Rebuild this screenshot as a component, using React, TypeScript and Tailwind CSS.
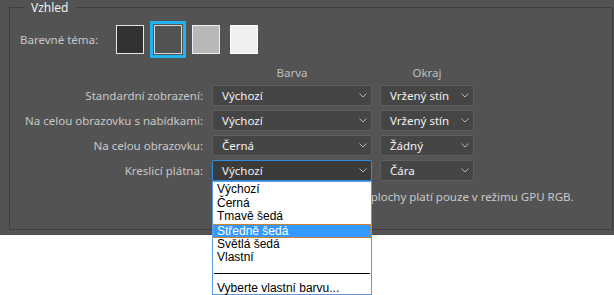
import { useState } from 'react';

function Chevron() {
  return (
    <svg width="8" height="5" viewBox="0 0 8 5" className="shrink-0">
      <polyline points="0.5,0.5 4,4 7.5,0.5" fill="none" stroke="#b4b4b4" strokeWidth="1" />
    </svg>
  );
}

function Select({ value, focused = false }: { value: string; focused?: boolean }) {
  return (
    <div
      className={
        focused
          ? 'flex h-[21px] items-center justify-between rounded-[2px] border border-[#2f8de4] bg-[#3b3b3b] pl-[9px] pr-[4px] text-[11.5px] text-[#f2f2f2]'
          : 'flex h-[21px] items-center justify-between rounded-[2px] border border-[#5f5f5f] bg-[#454545] pl-[9px] pr-[4px] text-[11.5px] text-[#f2f2f2]'
      }
    >
      <span className="leading-none">{value}</span>
      <Chevron />
    </div>
  );
}

const rows = [
  { label: 'Standardní zobrazení:', color: 'Výchozí', border: 'Vržený stín' },
  { label: 'Na celou obrazovku s nabídkami:', color: 'Výchozí', border: 'Vržený stín' },
  { label: 'Na celou obrazovku:', color: 'Černá', border: 'Žádný' },
  { label: 'Kreslicí plátna:', color: 'Výchozí', border: 'Čára' },
];

const options = ['Výchozí', 'Černá', 'Tmavě šedá', 'Středně šedá', 'Světlá šedá', 'Vlastní'];

export default function App() {
  const [theme] = useState(1);
  const swatches = ['bg-[#323232] border-[#e6e6e6]', 'bg-[#535353] border-[#d6d6d6]', 'bg-[#b8b8b8] border-[#efefef]', 'bg-[#f0f0f0] border-[#ffffff]'];

  return (
    <div className="h-[295px] w-[614px] overflow-hidden bg-white font-['Noto_Sans',sans-serif]">
      <div className="h-[235px] bg-[#535353]">
        <fieldset className="ml-[9px] mr-[1px] h-[230px] border border-[#3f3f3f] p-0">
          <legend className="ml-[15px] px-[6px] text-[12px] leading-[15px] text-[#f0f0f0]">Vzhled</legend>

          {/* Barevné téma */}
          <div className="mt-[10px] flex items-center pl-[10px]">
            <span className="w-[96px] text-[11.5px] text-[#c8c8c8]">Barevné téma:</span>
            <div className="flex gap-[10px]">
              {swatches.map((s, i) => (
                <div
                  key={i}
                  className={
                    i === theme
                      ? `h-[29px] w-[28px] border ${s} outline-[3px] outline-offset-[1px] outline-[#22b2ee]`
                      : `h-[29px] w-[28px] border ${s}`
                  }
                />
              ))}
            </div>
          </div>

          {/* Grid */}
          <div className="mt-[12px] grid grid-cols-[193px_160px_93px] gap-x-[9px] gap-y-[4px]">
            <div />
            <div className="mb-[1px] text-center text-[11.5px] leading-[14px] text-[#bebebe]">Barva</div>
            <div className="-ml-[1px] mb-[1px] text-center text-[11.5px] leading-[14px] text-[#bebebe]">Okraj</div>
            {rows.map((r, i) => (
              <div key={i} className="contents">
                <div className="flex items-center justify-end text-[11.5px] text-[#c8c8c8]">{r.label}</div>
                <div className="relative">
                  <Select value={r.color} focused={i === 3} />
                  {i === 3 && (
                    <div className="absolute left-0 top-[21px] z-10 h-[114px] w-[160px] border border-[#5b9be0] bg-white pt-[1px] font-['Liberation_Sans',sans-serif] text-[12px] text-black">
                      {options.map((o) => (
                        <div
                          key={o}
                          className={
                            o === 'Středně šedá'
                              ? 'h-[14px] border border-dotted border-[#d48a3a] bg-[#3399ff] pl-[3px] leading-[12px] text-white'
                              : 'h-[13.5px] pl-[4px] leading-[13.5px]'
                          }
                        >
                          {o}
                        </div>
                      ))}
                      <div className="mx-[1px] mt-[8px] h-[1px] bg-black" />
                      <div className="mt-[8px] pl-[4px] leading-[13px]">Vyberte vlastní barvu...</div>
                    </div>
                  )}
                </div>
                <div className="-ml-[1px]">
                  <Select value={r.border} />
                </div>
              </div>
            ))}
          </div>

          <div className="mt-[9px] pl-[264px] text-[11.5px] leading-[14px] text-[#c8c8c8]">
            Nastavení kreslicí plochy platí pouze v režimu GPU RGB.
          </div>
        </fieldset>
      </div>
    </div>
  );
}
